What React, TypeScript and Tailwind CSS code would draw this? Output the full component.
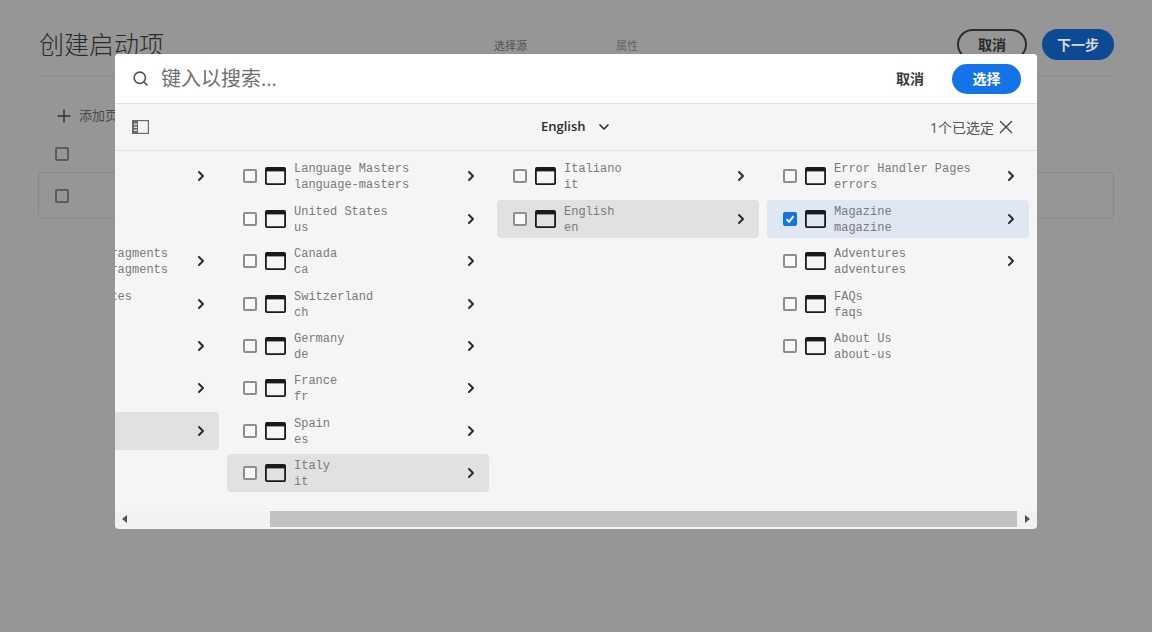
import { ChevronDown, ChevronRight, Plus, Search, X } from "lucide-react";

const CJK = "font-['Open_Sans','Noto_Sans_CJK_SC',sans-serif]";

interface Row {
  title: string;
  slug: string;
  active?: "gray" | "blue";
  checked?: boolean;
  arrow?: boolean;
}

const columns: Row[][] = [
  [
    { title: "Assets", slug: "assets", arrow: true },
    { title: "Forms", slug: "forms" },
    { title: "Experience Fragments", slug: "experience-fragments", arrow: true },
    { title: "Community Sites", slug: "sites", arrow: true },
    { title: "Screens", slug: "screens", arrow: true },
    { title: "Projects", slug: "projects", arrow: true },
    { title: "WKND", slug: "wknd", active: "gray", arrow: true },
  ],
  [
    { title: "Language Masters", slug: "language-masters", arrow: true },
    { title: "United States", slug: "us", arrow: true },
    { title: "Canada", slug: "ca", arrow: true },
    { title: "Switzerland", slug: "ch", arrow: true },
    { title: "Germany", slug: "de", arrow: true },
    { title: "France", slug: "fr", arrow: true },
    { title: "Spain", slug: "es", arrow: true },
    { title: "Italy", slug: "it", active: "gray", arrow: true },
  ],
  [
    { title: "Italiano", slug: "it", arrow: true },
    { title: "English", slug: "en", active: "gray", arrow: true },
  ],
  [
    { title: "Error Handler Pages", slug: "errors", arrow: true },
    { title: "Magazine", slug: "magazine", active: "blue", checked: true, arrow: true },
    { title: "Adventures", slug: "adventures", arrow: true },
    { title: "FAQs", slug: "faqs" },
    { title: "About Us", slug: "about-us" },
  ],
];

function PageIcon() {
  return (
    <svg width="21" height="18" viewBox="0 0 21 18" className="shrink-0">
      <rect x="0.9" y="0.9" width="19.2" height="16.2" rx="1" fill="none" stroke="#1a1a1a" strokeWidth="1.8" />
      <rect x="1" y="1" width="19" height="3.4" fill="#1a1a1a" />
    </svg>
  );
}

function RailIcon() {
  return (
    <svg width="17" height="14" viewBox="0 0 17 14">
      <rect x="0.6" y="0.6" width="15.8" height="12.8" fill="none" stroke="#6a6a6a" strokeWidth="1.2" />
      <rect x="1" y="1" width="5" height="12" fill="#6a6a6a" />
      <rect x="2" y="3.6" width="3" height="1.2" fill="#f5f5f5" />
      <rect x="2" y="6.6" width="3" height="1.2" fill="#f5f5f5" />
      <rect x="2" y="9.6" width="3" height="1.2" fill="#f5f5f5" />
    </svg>
  );
}

function Box({ checked }: { checked?: boolean }) {
  if (checked) {
    return (
      <span className="flex h-[14px] w-[14px] shrink-0 items-center justify-center rounded-[2px] bg-[#1473e6]">
        <svg width="10" height="10" viewBox="0 0 10 10">
          <path d="M1.5 5.2 4 7.8 8.6 2.2" fill="none" stroke="#fff" strokeWidth="2" />
        </svg>
      </span>
    );
  }
  return <span className="h-[14px] w-[14px] shrink-0 rounded-[2px] border-2 border-[#8e8e8e] bg-[#fafafa]" />;
}

function ColumnRow({ row }: { row: Row }) {
  const bg =
    row.active === "gray" ? "bg-[#e1e1e1]" : row.active === "blue" ? "bg-[#deE7f2]" : "";
  return (
    <div className={`flex h-[38px] w-[262px] shrink-0 items-center rounded-[4px] pl-4 ${bg}`}>
      <Box checked={row.checked} />
      <div className="ml-2">
        <PageIcon />
      </div>
      <div className="ml-2 w-[169px] whitespace-nowrap pt-[2px] font-['Liberation_Mono',monospace] text-[12px] leading-[16px] text-[#7a7a7a]">
        <div>{row.title}</div>
        <div>{row.slug}</div>
      </div>
      {row.arrow && <ChevronRight size={16} strokeWidth={3} className="text-[#2c2c2c]" />}
    </div>
  );
}

export default function App() {
  return (
    <div className={`relative h-screen w-full overflow-hidden bg-[#969696] ${CJK}`}>
      {/* dimmed page behind the picker */}
      <div className="px-[38px] pt-[29px]">
        <div className="flex h-[48px] items-start border-b border-[#8d8d8d]">
          <h1 className="ml-px w-[455px] text-[25px] font-light leading-[31px] text-[#2b2b2b]">创建启动项</h1>
          <div className="mt-[9px] w-[122px] text-[11px] text-[#555]">选择源</div>
          <div className="mt-[9px] text-[11px] text-[#666]">属性</div>
          <div className="ml-auto flex gap-[15px]">
            <div className="flex h-[31px] w-[70px] items-center justify-center rounded-full border-2 border-[#2f2f2f] text-[14px] font-bold text-[#2b2b2b]">
              取消
            </div>
            <div className="flex h-[31px] w-[72px] items-center justify-center rounded-full bg-[#0d4a93] text-[14px] font-bold text-[#d8d8d8]">
              下一步
            </div>
          </div>
        </div>
        <div className="mt-[29px] flex items-center pl-[16px] text-[13px] text-[#4a4a4a]">
          <Plus size={20} strokeWidth={1.75} className="text-[#333]" />
          <span className="ml-[5px]">添加页面</span>
        </div>
        <div className="mt-[21px] pl-[17px]">
          <span className="block h-[14px] w-[14px] rounded-[2px] border-2 border-[#5c5c5c]" />
        </div>
        <div className="mt-[11px] flex h-[47px] items-center rounded-[4px] border border-[#8a8a8a] pl-4">
          <span className="block h-[14px] w-[14px] rounded-[2px] border-2 border-[#5c5c5c]" />
        </div>
      </div>

      {/* path picker dialog */}
      <div className="absolute left-[115px] top-[54px] flex h-[475px] w-[922px] flex-col overflow-hidden rounded-[4px] bg-[#f5f5f5]">
        <div className="flex h-[50px] shrink-0 items-center border-b border-[#e1e1e1] bg-white pl-[17px] pr-4">
          <Search size={17} strokeWidth={2.25} className="text-[#505050]" />
          <span className="ml-[12px] text-[20px] text-[#6e6e6e]">键入以搜索...</span>
          <span className="ml-auto text-[14px] font-bold text-[#3a3a3a]">取消</span>
          <div className="ml-[28px] flex h-[30px] w-[69px] items-center justify-center rounded-full bg-[#1473e6] text-[14px] font-bold text-white">
            选择
          </div>
        </div>
        <div className="relative flex h-[47px] shrink-0 items-center border-b border-[#e1e1e1] pl-[17px] pr-[20px]">
          <RailIcon />
          <div className="absolute left-[426px] flex items-center text-[13px] font-semibold text-[#2c2c2c]">
            English
            <ChevronDown size={16} strokeWidth={2.5} className="ml-[10px]" />
          </div>
          <span className="ml-auto mr-px text-[14px] text-[#555]">1个已选定</span>
          <X size={22} strokeWidth={1.5} className="text-[#444]" />
        </div>
        <div className="flex min-h-0 flex-1 overflow-hidden pt-[6.3px]">
          <div className="ml-[-158px] flex gap-2">
            {columns.map((col, i) => (
              <div key={i} className="flex w-[262px] flex-col gap-[4.43px]">
                {col.map((row) => (
                  <ColumnRow key={row.slug + row.title} row={row} />
                ))}
              </div>
            ))}
          </div>
        </div>
        <div className="mb-[2px] flex h-[16px] shrink-0 items-center bg-[#f1f1f1]">
          <div className="flex w-[155px] items-center pl-[7px]">
            <span className="h-0 w-0 border-y-[4px] border-r-[5px] border-y-transparent border-r-[#505050]" />
          </div>
          <div className="h-full w-[747px] bg-[#c1c1c1]" />
          <div className="flex flex-1 items-center justify-center">
            <span className="h-0 w-0 border-y-[4px] border-l-[5px] border-y-transparent border-l-[#505050]" />
          </div>
        </div>
      </div>
    </div>
  );
}
